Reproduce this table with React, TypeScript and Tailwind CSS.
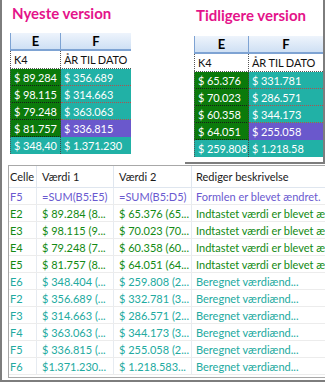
import React from "react";

type Cell = { t: string; bg: string; hb: string };

const G = "bg-[#0b7a0b]";
const T = "bg-[#21b1a6]";
const P = "bg-[#6a58cc]";

function Sheet({ e, rows }: { e: string; rows: [Cell, Cell][] }) {
  return (
    <div className="flex flex-col text-[11px] tracking-[-0.1px] leading-none whitespace-nowrap">
      <div className="flex h-[18px] border-b-2 border-[#7ea3d3] bg-gradient-to-b from-[#eef4fc] to-[#cfe0f4]">
        <div className={`${e} border-l border-r border-[#7ea3d3] flex items-center justify-center font-bold text-[13px] text-black`}>
          E
        </div>
        <div className="flex-1 flex items-center justify-center font-bold text-[13px] text-black">F</div>
      </div>
      <div className="flex h-[18px] bg-white border-b border-dotted border-[#555]">
        <div className={`${e} border-l border-r border-dotted border-[#555] flex items-center pl-[3px] text-[#111]`}>
          K4
        </div>
        <div className="flex-1 flex items-center pl-[3px] text-[#111] overflow-hidden">ÅR TIL DATO</div>
      </div>
      {rows.map(([a, b], i) => (
        <div key={i} className="flex h-[17px]">
          <div
            className={`${e} ${a.bg} ${a.hb} border-l border-r border-dotted border-l-[#555] border-r-[#444] flex items-center pl-[3px] text-white overflow-hidden`}
          >
            {a.t}
          </div>
          <div className={`flex-1 ${b.bg} ${b.hb} flex items-center pl-[3px] text-white overflow-hidden`}>{b.t}</div>
        </div>
      ))}
    </div>
  );
}

const GB = "border-b border-dotted border-b-[#1a1a1a]";
const TB = "border-b border-dotted border-[#b05050]";
const PB = "border-b border-dotted border-[#6a58cc]";

const leftRows: [Cell, Cell][] = [
  [{ t: "$ 89.284", bg: G, hb: GB }, { t: "$ 356.689", bg: T, hb: TB }],
  [{ t: "$ 98.115", bg: G, hb: GB }, { t: "$ 314.663", bg: T, hb: TB }],
  [{ t: "$ 79.248", bg: G, hb: GB }, { t: "$ 363.063", bg: T, hb: TB }],
  [{ t: "$ 81.757", bg: G, hb: GB }, { t: "$ 336.815", bg: P, hb: PB }],
  [{ t: "$ 348,40", bg: T, hb: "" }, { t: "$ 1.371.230", bg: T, hb: "" }],
];

const rightRows: [Cell, Cell][] = [
  [{ t: "$ 65.376", bg: G, hb: GB }, { t: "$ 331.781", bg: T, hb: TB }],
  [{ t: "$ 70.023", bg: G, hb: GB }, { t: "$ 286.571", bg: T, hb: TB }],
  [{ t: "$ 60.358", bg: G, hb: GB }, { t: "$ 344.173", bg: T, hb: TB }],
  [{ t: "$ 64.051", bg: G, hb: GB }, { t: "$ 255.058", bg: P, hb: PB }],
  [{ t: "$ 259.808", bg: T, hb: "" }, { t: "$ 1.218.58", bg: T, hb: "" }],
];

const PUR = "text-[#6a5ad0]";
const GRN = "text-[#138a13]";
const TEA = "text-[#22aaa0]";

const lower: { c: string; v1: string; v2: string; d: string; col: string }[] = [
  { c: "F5", v1: "=SUM(B5:E5)", v2: "=SUM(B5:D5)", d: "Formlen er blevet ændret.", col: PUR },
  { c: "E2", v1: "$ 89.284 (8...", v2: "$ 65.376 (65...", d: "Indtastet værdi er blevet ændret", col: GRN },
  { c: "E3", v1: "$ 98.115 (9...", v2: "$ 70.023 (70...", d: "Indtastet værdi er blevet ændret", col: GRN },
  { c: "E4", v1: "$ 79.248 (7...", v2: "$ 60.358 (60...", d: "Indtastet værdi er blevet ændret", col: GRN },
  { c: "E5", v1: "$ 81.757 (8...", v2: "$ 64.051 (64...", d: "Indtastet værdi er blevet ændret", col: GRN },
  { c: "E6", v1: "$ 348.404 (...", v2: "$ 259.808 (2...", d: "Beregnet værdiænd...", col: TEA },
  { c: "F2", v1: "$ 356.689 (...", v2: "$ 332.781 (3...", d: "Beregnet værdiænd...", col: TEA },
  { c: "F3", v1: "$ 314.663 (...", v2: "$ 286.571 (2...", d: "Beregnet værdiænd...", col: TEA },
  { c: "F4", v1: "$ 363.063 (...", v2: "$ 344.173 (3...", d: "Beregnet værdiænd...", col: TEA },
  { c: "F5", v1: "$ 336.815 (...", v2: "$ 255.058 (2...", d: "Beregnet værdiænd...", col: TEA },
  { c: "F6", v1: "$1.371.230...", v2: "$ 1.218.583...", d: "Beregnet værdiænd...", col: TEA },
];

export default function App() {
  return (
    <div className="w-[325px] h-[382px] bg-white overflow-hidden font-['Lato',sans-serif]">
      <div className="h-full border-l-2 border-b-2 border-[#7d7d7d] flex flex-col">
        <div className="flex h-[164px]">
          <div className="w-[183px] flex flex-col pl-[8px]">
            <div className="h-[33px] pl-[2px] pt-[2px] text-[15px] font-bold text-[#e4138a] whitespace-nowrap">
              Nyeste version
            </div>
            <div className="w-[121px]">
              <Sheet e="w-[51px]" rows={leftRows} />
            </div>
          </div>
          <div className="flex-1 flex flex-col border-r-2 border-b-2 border-[#7d7d7d] pl-[9px]">
            <div className="h-[36px] pl-[2px] pt-[4px] text-[15px] font-bold text-[#e4138a] whitespace-nowrap">
              Tidligere version
            </div>
            <Sheet e="w-[55px]" rows={rightRows} />
          </div>
        </div>
        <div className="flex-1 pl-[6px] pt-[1px] pb-[2px]">
          <div className="h-full border border-r-0 border-[#a8a8a8] flex flex-col text-[11px] leading-none whitespace-nowrap">
            <div className="flex h-[22px] border-b border-[#dfe6ef] text-[#1a1a1a]">
              <div className="w-[28px] flex items-center pl-[1px] border-r border-[#dfe6ef]">Celle</div>
              <div className="w-[77px] flex items-center pl-[5px] border-r border-[#dfe6ef]">Værdi 1</div>
              <div className="w-[78px] flex items-center pl-[5px] border-r border-[#dfe6ef]">Værdi 2</div>
              <div className="flex-1 flex items-center pl-[4px]">Rediger beskrivelse</div>
            </div>
            {lower.map((r, i) => (
              <div key={i} className={`flex h-[17px] border-b border-[#ececec] ${r.col}`}>
                <div className="w-[28px] flex items-center pl-[1px] border-r border-[#e6ebf1]">{r.c}</div>
                <div className="w-[77px] flex items-center pl-[5px] border-r border-[#e6ebf1] overflow-hidden">{r.v1}</div>
                <div className="w-[78px] flex items-center pl-[5px] border-r border-[#e6ebf1] overflow-hidden">{r.v2}</div>
                <div className="flex-1 flex items-center pl-[4px] overflow-hidden">{r.d}</div>
              </div>
            ))}
          </div>
        </div>
      </div>
    </div>
  );
}
